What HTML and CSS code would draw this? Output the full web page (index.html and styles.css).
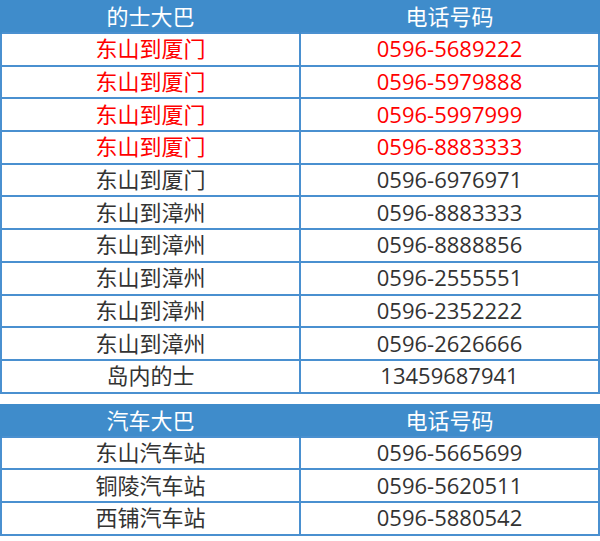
FILE: index.html
```html
<!DOCTYPE html>
<html lang="zh-CN">
<head>
<meta charset="utf-8">
<title>的士大巴电话</title>
<link rel="stylesheet" href="styles.css">
</head>
<body>
<table class="tbl">
  <thead>
    <tr><th>的士大巴</th><th>电话号码</th></tr>
  </thead>
  <tbody>
    <tr class="hot"><td>东山到厦门</td><td>0596-5689222</td></tr>
    <tr class="hot"><td>东山到厦门</td><td>0596-5979888</td></tr>
    <tr class="hot"><td>东山到厦门</td><td>0596-5997999</td></tr>
    <tr class="hot"><td>东山到厦门</td><td>0596-8883333</td></tr>
    <tr><td>东山到厦门</td><td>0596-6976971</td></tr>
    <tr><td>东山到漳州</td><td>0596-8883333</td></tr>
    <tr><td>东山到漳州</td><td>0596-8888856</td></tr>
    <tr><td>东山到漳州</td><td>0596-2555551</td></tr>
    <tr><td>东山到漳州</td><td>0596-2352222</td></tr>
    <tr><td>东山到漳州</td><td>0596-2626666</td></tr>
    <tr><td>岛内的士</td><td>13459687941</td></tr>
  </tbody>
</table>
<table class="tbl tbl-bus">
  <thead>
    <tr><th>汽车大巴</th><th>电话号码</th></tr>
  </thead>
  <tbody>
    <tr><td>东山汽车站</td><td>0596-5665699</td></tr>
    <tr><td>铜陵汽车站</td><td>0596-5620511</td></tr>
    <tr><td>西铺汽车站</td><td>0596-5880542</td></tr>
  </tbody>
</table>
</body>
</html>
```
FILE: styles.css
```css
html, body {
  margin: 0;
  padding: 0;
  background: #ffffff;
}
body {
  font-family: "Open Sans", "Noto Sans CJK SC", sans-serif;
  font-size: 22px;
  color: #333333;
}
.tbl {
  width: 600px;
  border-collapse: collapse;
  table-layout: fixed;
}
.tbl-bus {
  margin-top: 10px;
}
.tbl th {
  background: #3f8ccb;
  color: #ffffff;
  font-weight: normal;
  height: 32px;
  padding: 0;
  line-height: 32px;
  border: 2px solid #3f8ccb;
  border-top: 0;
  border-bottom: 0;
}
.tbl td {
  border: 2px solid #4a90d0;
  height: 28.7px;
  padding: 0 0 2px;
  line-height: 28px;
  text-align: center;
  vertical-align: middle;
}
.tbl tr.hot td {
  color: #ff0000;
}
```
